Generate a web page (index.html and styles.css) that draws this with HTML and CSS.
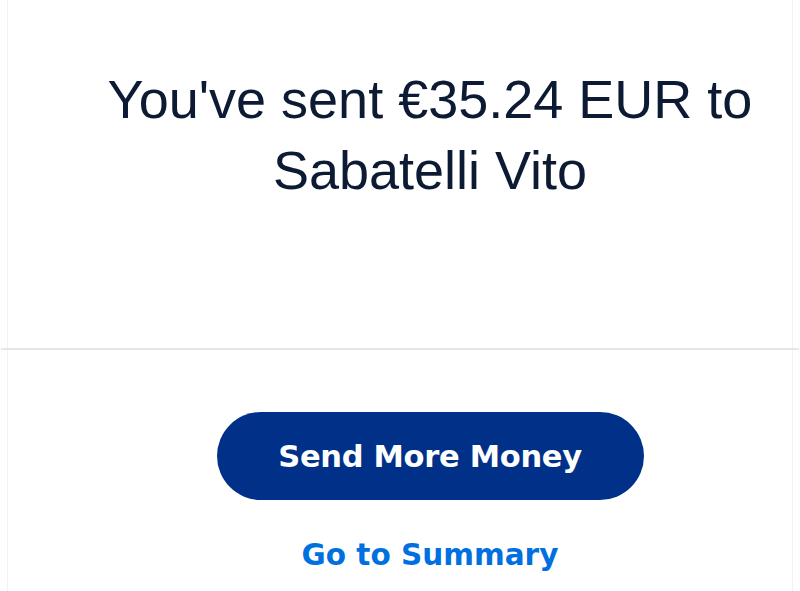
FILE: index.html
```html
<!DOCTYPE html>
<html>
<head>
<meta charset="utf-8">
<link rel="stylesheet" href="styles.css">
</head>
<body>
<div class="card">
  <section class="top">
    <h1 class="title">You've sent €35.24 EUR to<br>Sabatelli Vito</h1>
  </section>
  <section class="actions">
    <a class="btn-primary" href="#">Send More Money</a>
    <a class="link" href="#">Go to Summary</a>
  </section>
</div>
</body>
</html>
```
FILE: styles.css
```css
html, body {
  margin: 0;
  padding: 0;
  background: #ffffff;
}
body {
  font-family: "Liberation Sans", Arial, sans-serif;
  height: 591px;
  overflow: hidden;
}
.card {
  margin: 0 7px;
  height: 591px;
  border-left: 1px solid #f2f2f2;
  border-right: 1px solid #f2f2f2;
  box-sizing: border-box;
}
.top {
  height: 350px;
  box-sizing: border-box;
  padding: 64px 0 0 60px;
  border-bottom: 2px solid #e6e6e6;
  margin: 0 -7px;
}
.title {
  margin: 0;
  font-weight: 400;
  font-size: 54px;
  line-height: 71px;
  color: #0c1a33;
  text-align: center;
}
.actions {
  display: flex;
  flex-direction: column;
  align-items: center;
  padding: 62px 0 0 60px;
}
.btn-primary {
  width: 427px;
  height: 88px;
  border-radius: 44px;
  background: #003087;
  color: #fff;
  font-family: "DejaVu Sans", sans-serif;
  font-weight: 700;
  font-size: 30.5px;
  letter-spacing: -0.3px;
  text-decoration: none;
  display: flex;
  align-items: center;
  justify-content: center;
}
.link {
  margin-top: 38px;
  color: #0070e0;
  font-family: "DejaVu Sans", sans-serif;
  font-weight: 700;
  font-size: 29.5px;
  text-decoration: none;
}
```
